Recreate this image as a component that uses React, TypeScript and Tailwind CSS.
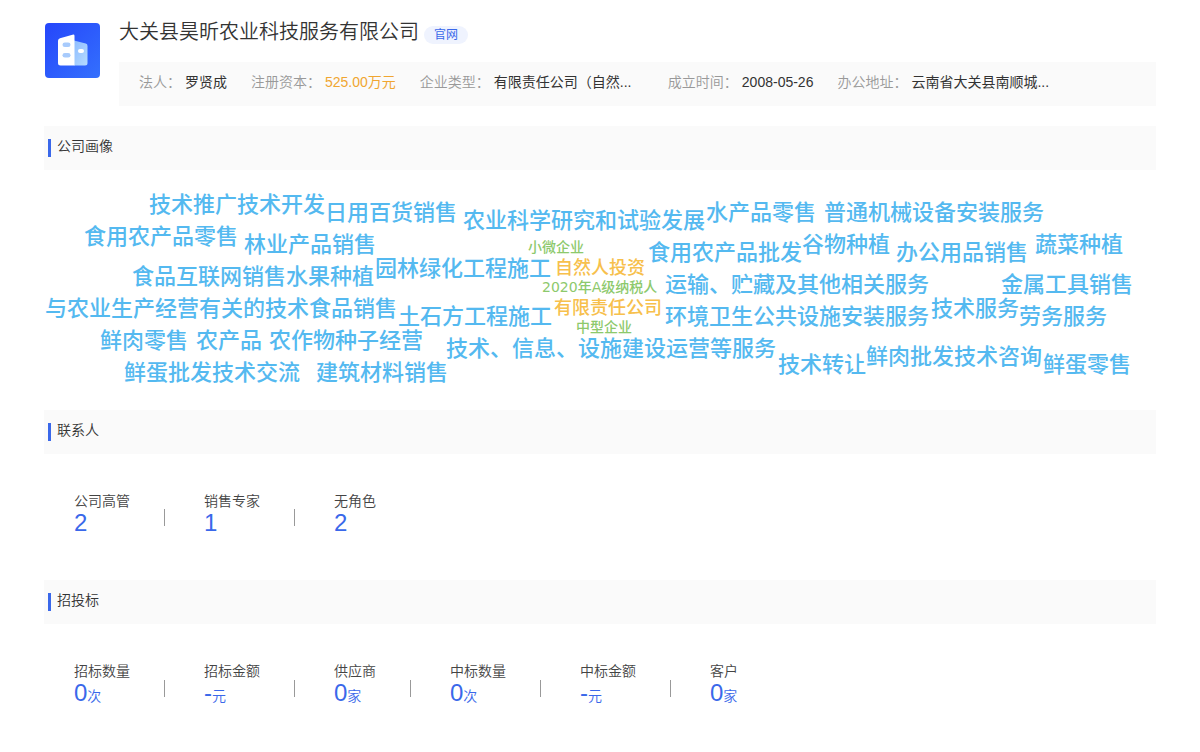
type Fact = { label: string; value: string; valueClass: string };
type Word = { text: string; x: number; y: number };
type Stat = { label: string; value: string; unit?: string };

const facts: Fact[] = [
  { label: "法人：", value: "罗贤成", valueClass: "text-[#333333]" },
  { label: "注册资本：", value: "525.00万元", valueClass: "text-[#f0a631]" },
  { label: "企业类型：", value: "有限责任公司（自然...", valueClass: "w-[150px] text-[#333333]" },
  { label: "成立时间：", value: "2008-05-26", valueClass: "text-[#333333]" },
  { label: "办公地址：", value: "云南省大关县南顺城...", valueClass: "w-[150px] text-[#333333]" },
];

// Coordinates are relative to the cloud canvas; y is the middle of the word.
const businessWords: Word[] = [
  { text: "技术推广", x: 105, y: 35 },
  { text: "技术开发", x: 193, y: 35 },
  { text: "日用百货销售", x: 281, y: 43 },
  { text: "农业科学研究和试验发展", x: 419, y: 51 },
  { text: "水产品零售", x: 662, y: 43 },
  { text: "普通机械设备安装服务", x: 780, y: 43 },
  { text: "食用农产品零售", x: 40, y: 67 },
  { text: "林业产品销售", x: 200, y: 75 },
  { text: "食用农产品批发", x: 604, y: 83 },
  { text: "谷物种植", x: 758, y: 75 },
  { text: "办公用品销售", x: 852, y: 83 },
  { text: "蔬菜种植", x: 991, y: 75 },
  { text: "食品互联网销售", x: 88, y: 107 },
  { text: "水果种植", x: 242, y: 107 },
  { text: "园林绿化工程施工", x: 331, y: 99 },
  { text: "运输、贮藏及其他相关服务", x: 621, y: 115 },
  { text: "金属工具销售", x: 957, y: 115 },
  { text: "与农业生产经营有关的技术", x: 1, y: 139 },
  { text: "食品销售", x: 265, y: 139 },
  { text: "土石方工程施工", x: 354, y: 147 },
  { text: "环境卫生公共设施安装服务", x: 621, y: 147 },
  { text: "技术服务", x: 887, y: 139 },
  { text: "劳务服务", x: 975, y: 147 },
  { text: "鲜肉零售", x: 56, y: 171 },
  { text: "农产品", x: 152, y: 171 },
  { text: "农作物种子经营", x: 225, y: 171 },
  { text: "技术、信息、设施建设运营等服务", x: 402, y: 179 },
  { text: "技术转让", x: 734, y: 195 },
  { text: "鲜肉批发", x: 822, y: 187 },
  { text: "技术咨询", x: 910, y: 187 },
  { text: "鲜蛋零售", x: 999, y: 195 },
  { text: "鲜蛋批发", x: 80, y: 203 },
  { text: "技术交流", x: 168, y: 203 },
  { text: "建筑材料销售", x: 272, y: 203 },
];

const ownershipWords: Word[] = [
  { text: "自然人投资", x: 511, y: 98 },
  { text: "有限责任公司", x: 510, y: 138 },
];

const scaleWords: Word[] = [
  { text: "小微企业", x: 484, y: 77 },
  { text: "2020年A级纳税人", x: 498, y: 117 },
  { text: "中型企业", x: 532, y: 157 },
];

const contacts: Stat[] = [
  { label: "公司高管", value: "2" },
  { label: "销售专家", value: "1" },
  { label: "无角色", value: "2" },
];

const bids: Stat[] = [
  { label: "招标数量", value: "0", unit: "次" },
  { label: "招标金额", value: "-", unit: "元" },
  { label: "供应商", value: "0", unit: "家" },
  { label: "中标数量", value: "0", unit: "次" },
  { label: "中标金额", value: "-", unit: "元" },
  { label: "客户", value: "0", unit: "家" },
];

function CompanyLogo() {
  return (
    <svg className="ml-px size-[55px] shrink-0" viewBox="0 0 55 55" aria-hidden="true">
      <defs>
        <linearGradient id="logo-bg" x1="0" y1="0" x2="1" y2="1">
          <stop offset="0" stopColor="#2546fb" />
          <stop offset="1" stopColor="#3470fd" />
        </linearGradient>
        <linearGradient id="logo-side" x1="0" y1="0" x2="1" y2="1">
          <stop offset="0" stopColor="#8ebcff" />
          <stop offset="1" stopColor="#b5dbff" />
        </linearGradient>
      </defs>
      <rect width="55" height="55" rx="4" fill="url(#logo-bg)" />
      <path d="M29 17.5 40.7 20.6Q42.5 21.1 42.5 23V40Q42.5 42.5 40 42.5H29Z" fill="url(#logo-side)" />
      <path d="M29.5 11.8V42.5H15.5Q13 42.5 13 40V17.8Q13 15.8 15 15.3L27.5 11.7Q29.5 11.2 29.5 12.8Z" fill="#fff" />
      <rect x="17.5" y="19.5" width="8" height="4.6" rx="2.3" fill="#a8cbfc" />
      <rect x="17.5" y="30" width="8" height="4.6" rx="2.3" fill="#a8cbfc" />
      <rect x="33" y="26" width="6" height="4" rx="2" fill="#fff" />
    </svg>
  );
}

function SectionTitle({ children }: { children: string }) {
  return (
    <div className="flex h-11 items-center bg-[#fafafa] pl-1">
      <span className="h-[18px] w-[3px] bg-[#3a68ea]" />
      <h2 className="ml-1.5 pb-1 text-sm leading-5 text-[#333333]">{children}</h2>
    </div>
  );
}

function Words({ words, className }: { words: Word[]; className: string }) {
  return words.map((word) => (
    <span
      key={word.text}
      className={`absolute -translate-y-1/2 whitespace-nowrap ${className}`}
      style={{ left: word.x, top: word.y }}
    >
      {word.text}
    </span>
  ));
}

function Stats({ items }: { items: Stat[] }) {
  return (
    <dl className="flex px-[30px] pt-9">
      {items.map((item, index) => (
        <div key={item.label} className="flex items-center">
          {index > 0 && <span className="mt-2.5 mr-[39px] ml-[34px] h-[17px] w-px bg-[#999999]" />}
          <div>
            <dt className="text-sm leading-[22px] text-[#444444]">{item.label}</dt>
            <dd className="text-2xl leading-[22px] text-[#3a68ea]">
              {item.value}
              {item.unit && <span className="text-sm leading-[22px]">{item.unit}</span>}
            </dd>
          </div>
        </div>
      ))}
    </dl>
  );
}

export default function App() {
  return (
    <main className="min-h-screen bg-white px-11 pt-5 pb-8 font-['Liberation_Sans','Noto_Sans_CJK_SC',sans-serif] font-[350]">
      <header className="flex gap-[19px]">
        <div className="pt-[3px]">
          <CompanyLogo />
        </div>
        <div className="min-w-0 flex-1">
          <div className="flex h-[42px] items-start">
            <h1 className="text-xl leading-6 text-[#333333]">大关县昊昕农业科技服务有限公司</h1>
            <a href="#website" className="mt-1.5 ml-[5px] rounded-full bg-[#eff3fe] px-2.5 text-xs leading-[18px] font-normal text-[#3a68ea]">
              官网
            </a>
          </div>
          <dl className="flex h-11 gap-6 bg-[#fafafa] px-5 pt-2.5 text-sm leading-5">
            {facts.map((fact) => (
              <div key={fact.label} className="flex shrink-0 gap-1 whitespace-nowrap">
                <dt className="text-[#999999]">{fact.label}</dt>
                <dd className={`font-normal ${fact.valueClass}`}>{fact.value}</dd>
              </div>
            ))}
          </dl>
        </div>
      </header>

      <section className="mt-5">
        <SectionTitle>公司画像</SectionTitle>
        <div className="relative h-60 overflow-hidden font-['DejaVu_Sans','Noto_Sans_CJK_SC',sans-serif] font-medium">
          <Words words={businessWords} className="text-[22px] leading-8 text-[#54b9f0]" />
          <Words words={ownershipWords} className="text-lg leading-7 text-[#f7c04c]" />
          <Words words={scaleWords} className="text-sm leading-5 text-[#8dc96c]" />
        </div>
      </section>

      <section className="h-[170px]">
        <SectionTitle>联系人</SectionTitle>
        <Stats items={contacts} />
      </section>

      <section>
        <SectionTitle>招投标</SectionTitle>
        <Stats items={bids} />
      </section>
    </main>
  );
}
